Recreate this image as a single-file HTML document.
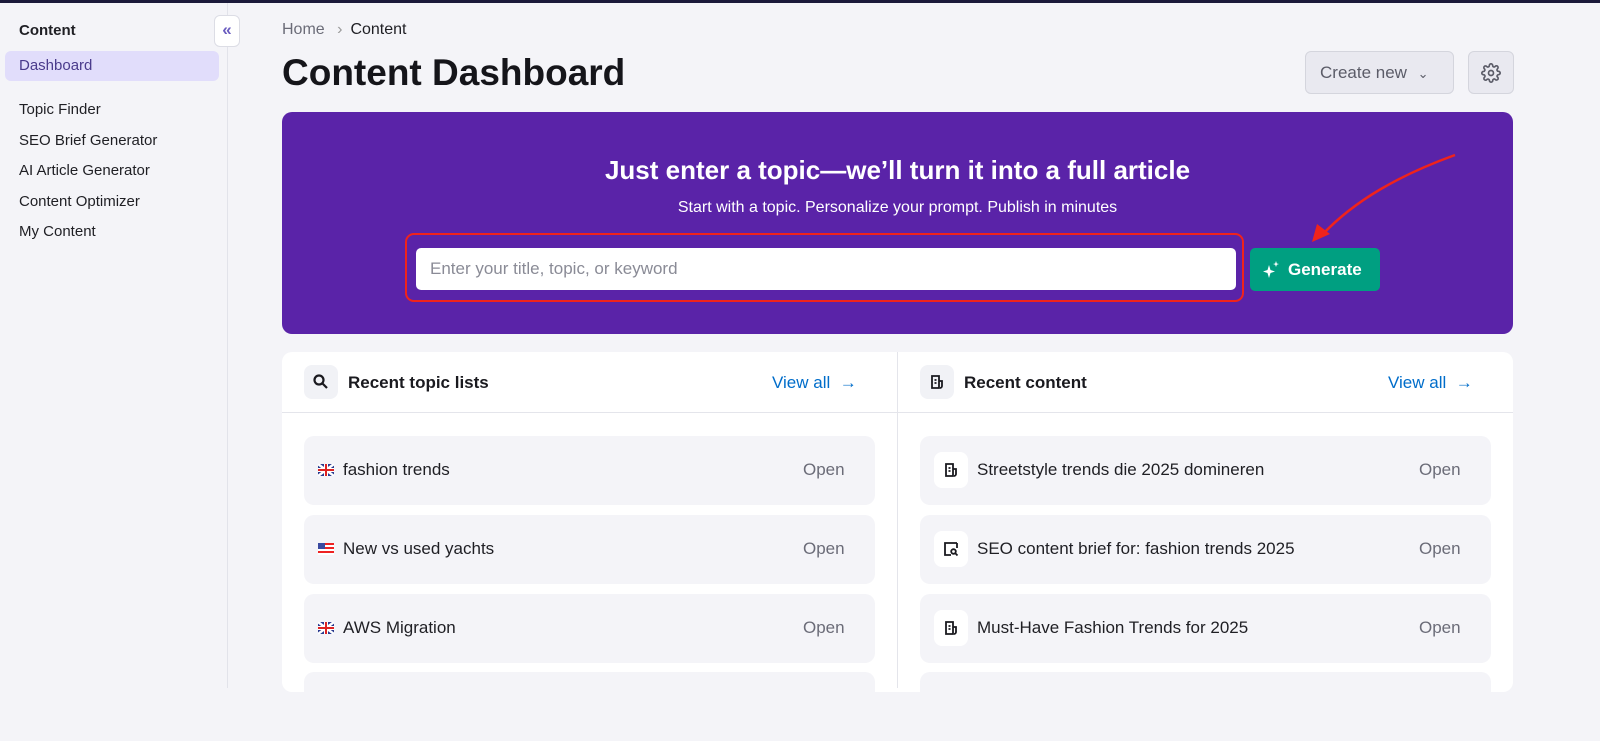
<!DOCTYPE html>
<html><head><meta charset="utf-8"><style>
*{box-sizing:border-box;margin:0;padding:0}
body{width:1600px;height:688px;overflow:hidden;background:#f4f4f8;font-family:"Liberation Sans",Arial,sans-serif;color:#1a1a1f;position:relative}
.abs{position:absolute}
.topline{left:0;top:0;width:1600px;height:3px;background:#1b1a3a}
.side{left:0;top:3px;width:228px;height:685px;border-right:1px solid #e2e3ea}
.nav{left:19px;font-size:15px;color:#1f1f24}
.card{background:#fff;border-radius:10px}
.row{background:#f4f4f8;border-radius:10px;height:69px}
.rowtxt{font-size:17px;color:#1f1f24}
.open{font-size:17px;color:#6b6c78}
.ib{width:34px;height:34px;border-radius:8px;background:#f1f2f6}
</style></head><body>
<div class="abs topline"></div>
<div class="abs side"></div>
<div class="abs nav" style="top:22px;font-weight:bold">Content</div>
<div class="abs" style="left:5px;top:51px;width:214px;height:30px;background:#e1ddfb;border-radius:6px"></div>
<div class="abs nav" style="top:57px;color:#4a3b8c">Dashboard</div>
<div class="abs nav" style="top:101px">Topic Finder</div>
<div class="abs nav" style="top:132px">SEO Brief Generator</div>
<div class="abs nav" style="top:162px">AI Article Generator</div>
<div class="abs nav" style="top:193px">Content Optimizer</div>
<div class="abs nav" style="top:223px">My Content</div>
<div class="abs" style="left:214px;top:15px;width:26px;height:32px;background:#fff;border:1px solid #dcdde5;border-radius:6px;color:#6a5cc0;font-size:17px;text-align:center;line-height:28px;font-weight:bold">«</div>

<div class="abs" style="left:282px;top:21px;font-size:16px;color:#6b6c78">Home <span style="margin:0 8px;color:#999">›</span><span style="color:#1f1f24">Content</span></div>
<div class="abs" style="left:282px;top:52px;font-size:37px;font-weight:bold;color:#15151a">Content Dashboard</div>
<div class="abs" style="left:1305px;top:51px;width:149px;height:43px;border:1px solid #d4d5dd;background:#e9e9f0;border-radius:6px;font-size:17px;color:#5b5c68;line-height:41px;padding-left:14px">Create new <span style="font-size:13px;margin-left:6px">⌄</span></div>
<div class="abs" style="left:1468px;top:51px;width:46px;height:43px;border:1px solid #d4d5dd;background:#e9e9f0;border-radius:6px"></div>
<svg class="abs" style="left:1481px;top:63px" width="20" height="20" viewBox="0 0 24 24" fill="none" stroke="#5b5c68" stroke-width="2"><circle cx="12" cy="12" r="3"/><path d="M19.4 15a1.7 1.7 0 0 0 .3 1.8l.1.1a2 2 0 1 1-2.8 2.8l-.1-.1a1.7 1.7 0 0 0-1.8-.3 1.7 1.7 0 0 0-1 1.5V21a2 2 0 0 1-4 0v-.1a1.7 1.7 0 0 0-1.1-1.5 1.7 1.7 0 0 0-1.8.3l-.1.1a2 2 0 1 1-2.8-2.8l.1-.1a1.7 1.7 0 0 0 .3-1.8 1.7 1.7 0 0 0-1.5-1H3a2 2 0 0 1 0-4h.1a1.7 1.7 0 0 0 1.5-1.1 1.7 1.7 0 0 0-.3-1.8l-.1-.1a2 2 0 1 1 2.8-2.8l.1.1a1.7 1.7 0 0 0 1.8.3H9a1.7 1.7 0 0 0 1-1.5V3a2 2 0 0 1 4 0v.1a1.7 1.7 0 0 0 1 1.5 1.7 1.7 0 0 0 1.8-.3l.1-.1a2 2 0 1 1 2.8 2.8l-.1.1a1.7 1.7 0 0 0-.3 1.8V9a1.7 1.7 0 0 0 1.5 1H21a2 2 0 0 1 0 4h-.1a1.7 1.7 0 0 0-1.5 1z"/></svg>

<div class="abs" style="left:282px;top:112px;width:1231px;height:222px;background:#5a23a8;border-radius:10px"></div>
<div class="abs" style="left:282px;top:155px;width:1231px;text-align:center;color:#fff;font-size:26px;font-weight:bold">Just enter a topic—we’ll turn it into a full article</div>
<div class="abs" style="left:282px;top:199px;width:1231px;text-align:center;color:#fff;font-size:16px">Start with a topic. Personalize your prompt. Publish in minutes</div>
<div class="abs" style="left:405px;top:233px;width:839px;height:69px;border:2px solid #f0231b;border-radius:9px"></div>
<div class="abs" style="left:416px;top:248px;width:820px;height:42px;background:#fff;border-radius:5px;font-size:17px;color:#8a8b96;line-height:42px;padding-left:14px">Enter your title, topic, or keyword</div>
<div class="abs" style="left:1250px;top:248px;width:130px;height:43px;background:#009f81;border-radius:5px;color:#fff;font-size:17px;font-weight:bold;line-height:43px;padding-left:38px">Generate</div>
<svg class="abs" style="left:1262px;top:259px" width="20" height="20" viewBox="0 0 20 20" fill="#fff"><path d="M7 6 L8.5 11 L13 12.5 L8.5 14 L7 19 L5.5 14 L1 12.5 L5.5 11Z"/><path d="M14 2 L14.8 4.5 L17 5 L14.8 5.7 L14 8 L13.2 5.7 L11 5 L13.2 4.5Z"/></svg>
<svg class="abs" style="left:1300px;top:150px" width="160" height="95" viewBox="0 0 160 95"><path d="M155 5 C100 25 55 50 22 85" fill="none" stroke="#f0231b" stroke-width="2.5"/><path d="M12 92 L17 74 L30 84Z" fill="#f0231b"/></svg>

<div class="abs card" style="left:282px;top:352px;width:1231px;height:340px"></div>
<div class="abs" style="left:897px;top:352px;width:1px;height:336px;background:#e4e5eb"></div>
<div class="abs" style="left:282px;top:412px;width:1231px;height:1px;background:#e4e5eb"></div>
<div class="abs ib" style="left:304px;top:365px"></div>
<svg class="abs" style="left:312px;top:373px" width="18" height="18" viewBox="0 0 18 18" fill="none" stroke="#1a1a1f" stroke-width="2.2"><circle cx="7" cy="7" r="4.5"/><path d="M10.5 10.5 L15 15"/></svg>
<div class="abs" style="left:348px;top:373px;font-size:17px;font-weight:bold">Recent topic lists</div>
<div class="abs" style="left:772px;top:373px;font-size:17px;color:#006dca">View all &nbsp;→</div>
<div class="abs ib" style="left:920px;top:365px"></div>
<svg class="abs" style="left:929px;top:374px" width="16" height="16" viewBox="0 0 16 16" fill="none" stroke="#1a1a1f" stroke-width="1.8"><path d="M3 2h7v12H3z M10 7h3v5a2 2 0 0 1-2 2 M5.5 6h2 M5.5 9h2"/></svg>
<div class="abs" style="left:964px;top:373px;font-size:17px;font-weight:bold">Recent content</div>
<div class="abs" style="left:1388px;top:373px;font-size:17px;color:#006dca">View all &nbsp;→</div>

<!-- left rows -->
<div class="abs row" style="left:304px;top:436px;width:571px"></div>
<div class="abs row" style="left:304px;top:515px;width:571px"></div>
<div class="abs row" style="left:304px;top:594px;width:571px"></div>
<div class="abs row" style="left:304px;top:672px;width:571px"></div>
<div class="abs row" style="left:920px;top:436px;width:571px"></div>
<div class="abs row" style="left:920px;top:515px;width:571px"></div>
<div class="abs row" style="left:920px;top:594px;width:571px"></div>
<div class="abs row" style="left:920px;top:672px;width:571px"></div>

<svg class="abs" style="left:318px;top:464px" width="16" height="12"><rect width="16" height="12" fill="#2a3b8f"/><path d="M0 0L16 12M16 0L0 12" stroke="#fff" stroke-width="2.5"/><path d="M8 0V12M0 6H16" stroke="#fff" stroke-width="4"/><path d="M8 0V12M0 6H16" stroke="#d22" stroke-width="2"/></svg>
<div class="abs rowtxt" style="left:343px;top:460px">fashion trends</div>
<svg class="abs" style="left:318px;top:543px" width="16" height="12"><rect width="16" height="12" fill="#fff"/><path d="M0 1H16M0 5H16M0 9H16" stroke="#e22" stroke-width="2"/><rect width="7" height="6" fill="#3a4aa0"/></svg>
<div class="abs rowtxt" style="left:343px;top:539px">New vs used yachts</div>
<svg class="abs" style="left:318px;top:622px" width="16" height="12"><rect width="16" height="12" fill="#2a3b8f"/><path d="M0 0L16 12M16 0L0 12" stroke="#fff" stroke-width="2.5"/><path d="M8 0V12M0 6H16" stroke="#fff" stroke-width="4"/><path d="M8 0V12M0 6H16" stroke="#d22" stroke-width="2"/></svg>
<div class="abs rowtxt" style="left:343px;top:618px">AWS Migration</div>
<div class="abs open" style="left:803px;top:460px">Open</div>
<div class="abs open" style="left:803px;top:539px">Open</div>
<div class="abs open" style="left:803px;top:618px">Open</div>

<div class="abs" style="left:934px;top:452px;width:34px;height:36px;background:#fff;border-radius:8px"></div>
<div class="abs" style="left:934px;top:531px;width:34px;height:36px;background:#fff;border-radius:8px"></div>
<div class="abs" style="left:934px;top:610px;width:34px;height:36px;background:#fff;border-radius:8px"></div>
<svg class="abs" style="left:943px;top:462px" width="16" height="16" viewBox="0 0 16 16" fill="none" stroke="#1a1a1f" stroke-width="1.8"><path d="M3 2h7v12H3z M10 7h3v5a2 2 0 0 1-2 2 M5.5 6h2 M5.5 9h2"/></svg>
<svg class="abs" style="left:943px;top:541px" width="16" height="16" viewBox="0 0 16 16" fill="none" stroke="#1a1a1f" stroke-width="1.8"><path d="M14 2H2v12h6 M14 2v5"/><circle cx="10.5" cy="10.5" r="2.3"/><path d="M12.3 12.3L14.5 14.5"/></svg>
<svg class="abs" style="left:943px;top:620px" width="16" height="16" viewBox="0 0 16 16" fill="none" stroke="#1a1a1f" stroke-width="1.8"><path d="M3 2h7v12H3z M10 7h3v5a2 2 0 0 1-2 2 M5.5 6h2 M5.5 9h2"/></svg>
<div class="abs rowtxt" style="left:977px;top:460px">Streetstyle trends die 2025 domineren</div>
<div class="abs rowtxt" style="left:977px;top:539px">SEO content brief for: fashion trends 2025</div>
<div class="abs rowtxt" style="left:977px;top:618px">Must-Have Fashion Trends for 2025</div>
<div class="abs open" style="left:1419px;top:460px">Open</div>
<div class="abs open" style="left:1419px;top:539px">Open</div>
<div class="abs open" style="left:1419px;top:618px">Open</div>
</body></html>
